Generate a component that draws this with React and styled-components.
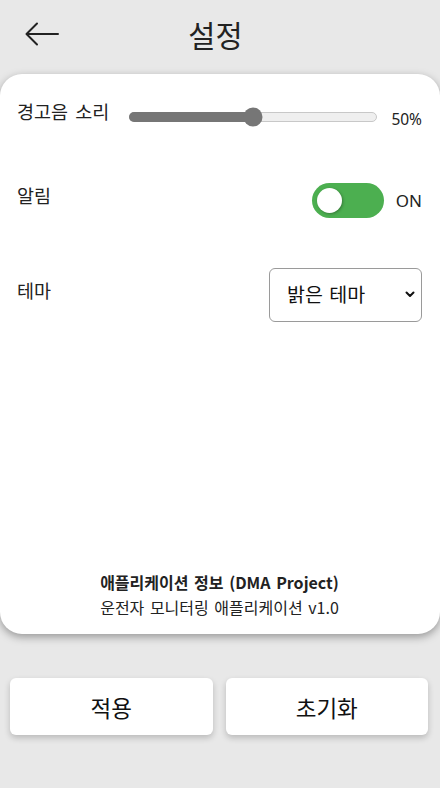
import React, { useState } from "react";
import styled, { createGlobalStyle } from "styled-components";

const Global = createGlobalStyle`
  html, body { margin: 0; padding: 0; background: #e8e8e8; }
  body { font-family: "Noto Sans", "Noto Sans CJK KR", sans-serif; color: #222; }
  * { box-sizing: border-box; }
`;

const Page = styled.div`
  width: 440px;
  height: 788px;
  display: flex;
  flex-direction: column;
  background: #e8e8e8;
  overflow: hidden;
`;

const Header = styled.header`
  height: 74px;
  display: flex;
  align-items: center;
  padding: 0 0 6px 25px;
`;

const BackButton = styled.button`
  border: none;
  background: none;
  padding: 0;
  width: 34px;
  height: 24px;
  display: flex;
  align-items: center;
  cursor: pointer;
`;

const Title = styled.h1`
  flex: 1;
  margin: 0;
  padding-right: 68px;
  text-align: center;
  font-family: "Noto Sans CJK KR", sans-serif;
  font-weight: 400;
  font-size: 29.5px;
  color: #222;
`;

const Card = styled.main`
  height: 560px;
  background: #fff;
  border-radius: 22px;
  box-shadow: 0 3px 8px rgba(0, 0, 0, 0.35);
  padding: 26px 18px 14px 17px;
  display: flex;
  flex-direction: column;
  gap: 50px;
`;

const Row = styled.div`
  display: flex;
  align-items: center;
  justify-content: space-between;
`;

const Label = styled.span`
  font-family: "Noto Sans CJK KR", sans-serif;
  font-size: 18.5px;
  line-height: 23px;
  word-spacing: 3px;
  margin-bottom: 10px;
  color: #222;
  white-space: nowrap;
`;

const SliderTrack = styled.div`
  position: relative;
  flex: 1;
  height: 10px;
  border-radius: 5px;
  background: #efefef;
  border: 1px solid #c8c8c8;
  margin: 0 14px 0 20px;
`;

const SliderFill = styled.div`
  position: absolute;
  left: -1px;
  top: -1px;
  bottom: -1px;
  background: #767676;
  border-radius: 5px;
`;

const SliderThumb = styled.div`
  position: absolute;
  top: 50%;
  width: 19px;
  height: 19px;
  border-radius: 50%;
  background: #767676;
  transform: translate(-50%, -50%);
`;

const Value = styled.span`
  font-family: "Noto Sans", sans-serif;
  font-size: 15.5px;
  color: #222;
  margin-top: 4px;
`;

const Group = styled.div`
  display: flex;
  align-items: center;
  gap: 12px;
`;

const Toggle = styled.button`
  position: relative;
  width: 72px;
  height: 35px;
  border-radius: 18px;
  border: none;
  padding: 0;
  background: ${(p) => (p.$on ? "#4caf50" : "#ccc")};
  cursor: pointer;
`;

const Knob = styled.span`
  position: absolute;
  top: 5px;
  left: ${(p) => (p.$on ? "5px" : "42px")};
  width: 25px;
  height: 25px;
  border-radius: 50%;
  background: #fff;
  box-shadow: 1px 1px 3px rgba(0, 0, 0, 0.3);
`;

const OnText = styled.span`
  font-family: "Noto Sans", sans-serif;
  font-size: 17px;
  color: #222;
`;

const SelectWrap = styled.div`
  position: relative;
  width: 153px;
  height: 54px;
`;

const Select = styled.select`
  appearance: none;
  width: 100%;
  height: 100%;
  border: 1px solid #9a9a9a;
  border-radius: 6px;
  background: #fff;
  padding: 0 0 3px 17px;
  font-family: "Noto Sans CJK KR", sans-serif;
  font-size: 19.5px;
  word-spacing: 2px;
  color: #111;
`;

const Chevron = styled.svg`
  position: absolute;
  right: 7px;
  top: 23px;
  pointer-events: none;
`;

const Footer = styled.footer`
  margin-top: auto;
  text-align: center;
  font-family: "Noto Sans CJK KR", "Noto Sans", sans-serif;
  font-size: 16px;
  line-height: 25px;
  word-spacing: 2px;
  color: #222;
`;

const FooterTitle = styled.div`
  font-weight: 700;
`;

const Actions = styled.div`
  display: grid;
  grid-template-columns: 1fr 1fr;
  gap: 13px;
  padding: 44px 12px 0 10px;
`;

const ActionButton = styled.button`
  height: 57px;
  border: none;
  border-radius: 6px;
  background: #fff;
  box-shadow: 0 3px 6px rgba(0, 0, 0, 0.2);
  font-family: "Noto Sans CJK KR", sans-serif;
  font-size: 22.5px;
  color: #111;
  cursor: pointer;
`;

export default function App() {
  const [volume] = useState(50);
  const [on, setOn] = useState(true);
  return (
    <Page>
      <Global />
      <Header>
        <BackButton aria-label="뒤로">
          <svg width="34" height="24" viewBox="0 0 34 24" fill="none">
            <path d="M33 12H2M12 1.5L1.5 12L12 22.5" stroke="#222" strokeWidth="2" strokeLinecap="round" strokeLinejoin="round" />
          </svg>
        </BackButton>
        <Title>설정</Title>
      </Header>
      <Card>
        <Row>
          <Label>경고음 소리</Label>
          <SliderTrack>
            <SliderFill style={{ width: `calc(${volume}% + 2px)` }} />
            <SliderThumb style={{ left: `${volume}%` }} />
          </SliderTrack>
          <Value>{volume}%</Value>
        </Row>
        <Row>
          <Label>알림</Label>
          <Group>
            <Toggle $on={on} onClick={() => setOn(!on)} aria-label="알림">
              <Knob $on={on} />
            </Toggle>
            <OnText>{on ? "ON" : "OFF"}</OnText>
          </Group>
        </Row>
        <Row>
          <Label>테마</Label>
          <SelectWrap>
            <Select defaultValue="light">
              <option value="light">밝은 테마</option>
              <option value="dark">어두운 테마</option>
            </Select>
            <Chevron width="10" height="7" viewBox="0 0 10 7">
              <path d="M1.5 1.5L5 5L8.5 1.5" stroke="#111" strokeWidth="2" fill="none" strokeLinecap="round" strokeLinejoin="round" />
            </Chevron>
          </SelectWrap>
        </Row>
        <Footer>
          <FooterTitle>애플리케이션 정보 (DMA Project)</FooterTitle>
          <div>운전자 모니터링 애플리케이션 v1.0</div>
        </Footer>
      </Card>
      <Actions>
        <ActionButton>적용</ActionButton>
        <ActionButton>초기화</ActionButton>
      </Actions>
    </Page>
  );
}
